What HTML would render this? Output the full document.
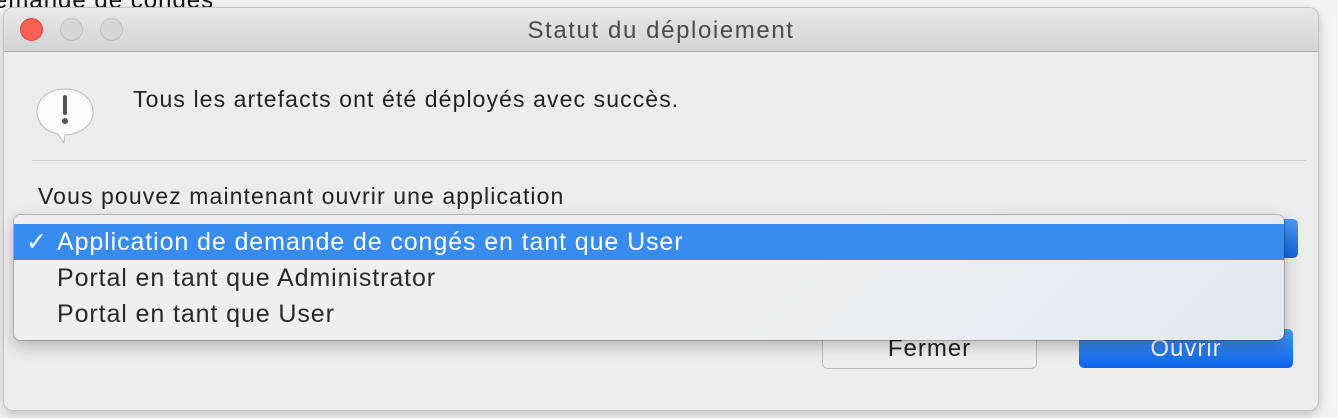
<!DOCTYPE html>
<html><head><meta charset="utf-8"><style>
body{margin:0;width:1338px;height:418px;background:#f4f4f4;position:relative;overflow:hidden;font-family:"Liberation Sans",sans-serif;}
.abs{position:absolute;}
.win{left:4px;top:8px;width:1314px;height:402px;background:#ececec;border-radius:9px;box-shadow:0 0 0 1px #c4c4c4,0 4px 12px rgba(0,0,0,.25);overflow:hidden;}
.tb{left:0;top:0;width:100%;height:43px;background:linear-gradient(#e8e8e8,#d3d3d3);border-bottom:1px solid #b0b0b0;}
.dot{width:23px;height:23px;border-radius:50%;top:10px;box-sizing:border-box;}
.t{color:#222;font-size:23px;letter-spacing:1.1px;white-space:nowrap;}
.menu{left:14px;top:215px;width:1270px;height:125px;background:linear-gradient(135deg,#efefef 60%,#e4e9ef);border-radius:7px;box-shadow:0 0 0 1px rgba(0,0,0,.2),0 6px 16px rgba(0,0,0,.25);}
.row{position:absolute;left:0;width:100%;height:36px;line-height:36px;font-size:25px;letter-spacing:0.9px;color:#2a2a2a;text-indent:43px;white-space:nowrap;}
</style></head><body>
<div class="abs" style="left:-6px;top:-13px;font-size:24px;letter-spacing:1px;color:#111">emande de congés</div>
<div class="abs win">
 <div class="abs tb">
  <div class="abs dot" style="left:16px;background:#fe5f57;border:1px solid #e2463f"></div>
  <div class="abs dot" style="left:56px;background:#d6d6d6;border:1px solid #bdbdbd"></div>
  <div class="abs dot" style="left:96px;background:#d6d6d6;border:1px solid #bdbdbd"></div>
  <div class="abs" style="left:0;width:100%;top:9px;text-align:center;font-size:24px;letter-spacing:1.6px;color:#4a4a4a">Statut du déploiement</div>
 </div>
 <svg class="abs" style="left:30px;top:78px" width="62" height="60" viewBox="0 0 62 60">
  <path d="M31 3C15 3 3 13 3 26c0 11 9 20 21 22l6 9 1-8c16-1 28-10 28-23C59 13 47 3 31 3z" fill="#fbfbfb" stroke="#bbb" stroke-width="1"/>
  <rect x="29" y="9" width="4" height="20" rx="2" fill="#555"/><circle cx="31" cy="35" r="3" fill="#555"/>
 </svg>
 <div class="abs t" style="left:129px;top:78px">Tous les artefacts ont été déployés avec succès.</div>
 <div class="abs" style="left:28px;top:152px;width:1274px;height:1px;background:#d0d0d0"></div>
 <div class="abs t" style="left:34px;top:175px">Vous pouvez maintenant ouvrir une application</div>
 <div class="abs" style="left:1262px;top:211px;width:32px;height:39px;background:linear-gradient(#4a9af5,#0f66e0);border-radius:5px"></div>
 <div class="abs" style="left:819px;top:321px;width:213px;height:39px;background:linear-gradient(#fafafa,#ececec);border-radius:5px;box-shadow:0 0 0 1px #bcbcbc;text-align:center;line-height:39px;font-size:24px;letter-spacing:1px;color:#222">Fermer</div>
 <div class="abs" style="left:1075px;top:321px;width:214px;height:39px;background:linear-gradient(#4d9bf6,#0b63ea);border-radius:5px;text-align:center;line-height:39px;font-size:24px;letter-spacing:1px;color:#fff">Ouvrir</div>
</div>
<div class="abs menu">
 <div class="row" style="top:9px;background:#388cf0;color:#fff"><span style="position:absolute;left:12px;text-indent:0">✓</span>Application de demande de congés en tant que User</div>
 <div class="row" style="top:45px">Portal en tant que Administrator</div>
 <div class="row" style="top:81px">Portal en tant que User</div>
</div>
</body></html>
